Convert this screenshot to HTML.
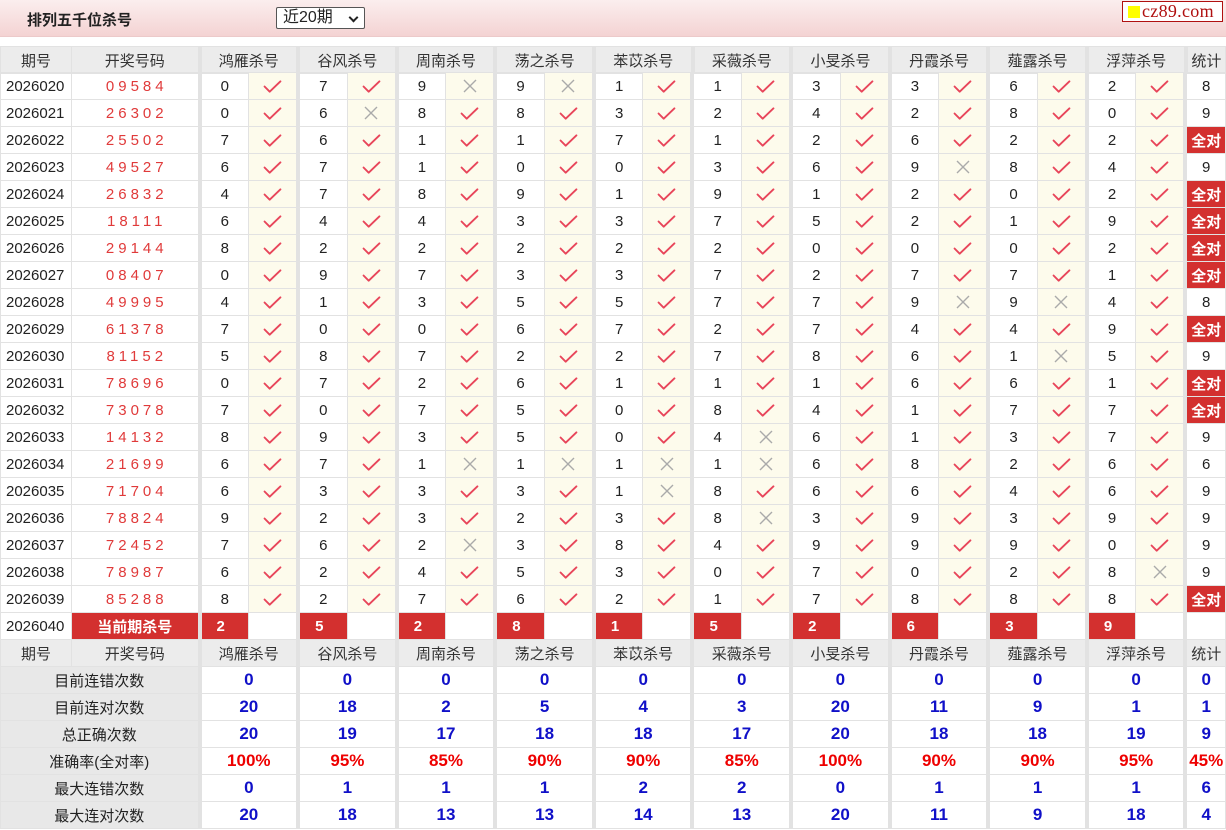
<!DOCTYPE html>
<html><head><meta charset="utf-8">
<style>
*{margin:0;padding:0;box-sizing:border-box}
body{width:1226px;height:830px;background:#fff;font-family:"Liberation Sans","Noto Sans CJK SC",sans-serif;font-size:15px;color:#222;overflow:hidden;position:relative}
.top{position:absolute;left:0;top:0;width:1226px;height:37px;background:linear-gradient(#fbeeee,#f4d3d3);border-bottom:1px solid #eccaca}
.title{position:absolute;left:27px;top:9px;font-weight:bold;font-size:15px;color:#222}
.sel{position:absolute;left:276px;top:7px;width:89px;height:22px;border:1px solid #555;background:#fff;font-size:16px;padding-left:6px;line-height:20px;border-radius:2px}
.sel b{position:absolute;right:7px;top:6px;width:7px;height:7px;border-right:2px solid #222;border-bottom:2px solid #222;transform:rotate(45deg)}
.logo{position:absolute;left:1122px;top:1px;width:101px;height:21px;background:#fff;border:1px solid #b01010;font-family:"Liberation Serif",serif;font-size:18px;color:#b01010;line-height:19px;padding-left:19px;letter-spacing:.3px;overflow:hidden}
.logo i{position:absolute;left:5px;top:4px;width:12px;height:12px;background:#ffff00}
table{position:absolute;left:0;top:46px;width:1226px;border-collapse:collapse;table-layout:fixed}
td,th{height:27px;border:1px solid #e2e2e2;text-align:center;font-weight:normal;padding:0;white-space:nowrap}
th{background:#ececec;color:#333}
td.q{text-align:left;padding-left:5px}
td.k{color:#e03a3a;letter-spacing:4px;padding-left:4px}
.g{border-left:4px solid #e2e2e2}
td.c{background:#fdfbec;font-size:0}
td.c svg{display:block;margin:0 auto}
.r{background:#d3302f;color:#fff;font-weight:bold}
td.all{background:#d3302f;color:#fff;font-weight:bold}
td.rn{text-align:left;padding-left:15px}
.lb{background:#e8e8e8}
.b{color:#1010c8;font-weight:bold;font-size:17px}
.p{color:#e00;font-weight:bold;font-size:17px}
</style></head><body>
<div class="top"><div class="title">排列五千位杀号</div><div class="sel">近20期<b></b></div><div class="logo"><i></i>cz89.com</div></div>
<svg width="0" height="0" style="position:absolute"><defs>
<symbol id="ck" viewBox="0 0 22 16"><path d="M2.5 8 L8 13.5 L19.5 2.5" fill="none" stroke="#e8455a" stroke-width="2" stroke-linecap="round" stroke-linejoin="round"/></symbol>
<symbol id="xx" viewBox="0 0 16 16"><path d="M2 2 L14 14 M14 2 L2 14" fill="none" stroke="#aaa" stroke-width="1.4"/></symbol>
</defs></svg>
<table>
<colgroup><col style="width:71px"><col style="width:128px">
<col style="width:49px"><col style="width:49.6px"><col style="width:49px"><col style="width:49.6px"><col style="width:49px"><col style="width:49.6px"><col style="width:49px"><col style="width:49.6px"><col style="width:49px"><col style="width:49.6px"><col style="width:49px"><col style="width:49.6px"><col style="width:49px"><col style="width:49.6px"><col style="width:49px"><col style="width:49.6px"><col style="width:49px"><col style="width:49.6px"><col style="width:49px"><col style="width:49.6px"><col style="width:40px"></colgroup>
<tr><th>期号</th><th>开奖号码</th><th colspan="2" class="g">鸿雁杀号</th><th colspan="2" class="g">谷风杀号</th><th colspan="2" class="g">周南杀号</th><th colspan="2" class="g">荡之杀号</th><th colspan="2" class="g">苯苡杀号</th><th colspan="2" class="g">采薇杀号</th><th colspan="2" class="g">小旻杀号</th><th colspan="2" class="g">丹霞杀号</th><th colspan="2" class="g">薤露杀号</th><th colspan="2" class="g">浮萍杀号</th><th class="g">统计</th></tr>
</table>
<table style="top:72px">
<colgroup><col style="width:71px"><col style="width:128px">
<col style="width:49px"><col style="width:49.6px"><col style="width:49px"><col style="width:49.6px"><col style="width:49px"><col style="width:49.6px"><col style="width:49px"><col style="width:49.6px"><col style="width:49px"><col style="width:49.6px"><col style="width:49px"><col style="width:49.6px"><col style="width:49px"><col style="width:49.6px"><col style="width:49px"><col style="width:49.6px"><col style="width:49px"><col style="width:49.6px"><col style="width:49px"><col style="width:49.6px"><col style="width:40px"></colgroup>
<tbody id="body2">
<tr><td class="q">2026020</td><td class="k">09584</td><td class="g">0</td><td class="c">C</td><td class="g">7</td><td class="c">C</td><td class="g">9</td><td class="c">X</td><td class="g">9</td><td class="c">X</td><td class="g">1</td><td class="c">C</td><td class="g">1</td><td class="c">C</td><td class="g">3</td><td class="c">C</td><td class="g">3</td><td class="c">C</td><td class="g">6</td><td class="c">C</td><td class="g">2</td><td class="c">C</td><td class="g">8</td></tr>
<tr><td class="q">2026021</td><td class="k">26302</td><td class="g">0</td><td class="c">C</td><td class="g">6</td><td class="c">X</td><td class="g">8</td><td class="c">C</td><td class="g">8</td><td class="c">C</td><td class="g">3</td><td class="c">C</td><td class="g">2</td><td class="c">C</td><td class="g">4</td><td class="c">C</td><td class="g">2</td><td class="c">C</td><td class="g">8</td><td class="c">C</td><td class="g">0</td><td class="c">C</td><td class="g">9</td></tr>
<tr><td class="q">2026022</td><td class="k">25502</td><td class="g">7</td><td class="c">C</td><td class="g">6</td><td class="c">C</td><td class="g">1</td><td class="c">C</td><td class="g">1</td><td class="c">C</td><td class="g">7</td><td class="c">C</td><td class="g">1</td><td class="c">C</td><td class="g">2</td><td class="c">C</td><td class="g">6</td><td class="c">C</td><td class="g">2</td><td class="c">C</td><td class="g">2</td><td class="c">C</td><td class="g all">全对</td></tr>
<tr><td class="q">2026023</td><td class="k">49527</td><td class="g">6</td><td class="c">C</td><td class="g">7</td><td class="c">C</td><td class="g">1</td><td class="c">C</td><td class="g">0</td><td class="c">C</td><td class="g">0</td><td class="c">C</td><td class="g">3</td><td class="c">C</td><td class="g">6</td><td class="c">C</td><td class="g">9</td><td class="c">X</td><td class="g">8</td><td class="c">C</td><td class="g">4</td><td class="c">C</td><td class="g">9</td></tr>
<tr><td class="q">2026024</td><td class="k">26832</td><td class="g">4</td><td class="c">C</td><td class="g">7</td><td class="c">C</td><td class="g">8</td><td class="c">C</td><td class="g">9</td><td class="c">C</td><td class="g">1</td><td class="c">C</td><td class="g">9</td><td class="c">C</td><td class="g">1</td><td class="c">C</td><td class="g">2</td><td class="c">C</td><td class="g">0</td><td class="c">C</td><td class="g">2</td><td class="c">C</td><td class="g all">全对</td></tr>
<tr><td class="q">2026025</td><td class="k">18111</td><td class="g">6</td><td class="c">C</td><td class="g">4</td><td class="c">C</td><td class="g">4</td><td class="c">C</td><td class="g">3</td><td class="c">C</td><td class="g">3</td><td class="c">C</td><td class="g">7</td><td class="c">C</td><td class="g">5</td><td class="c">C</td><td class="g">2</td><td class="c">C</td><td class="g">1</td><td class="c">C</td><td class="g">9</td><td class="c">C</td><td class="g all">全对</td></tr>
<tr><td class="q">2026026</td><td class="k">29144</td><td class="g">8</td><td class="c">C</td><td class="g">2</td><td class="c">C</td><td class="g">2</td><td class="c">C</td><td class="g">2</td><td class="c">C</td><td class="g">2</td><td class="c">C</td><td class="g">2</td><td class="c">C</td><td class="g">0</td><td class="c">C</td><td class="g">0</td><td class="c">C</td><td class="g">0</td><td class="c">C</td><td class="g">2</td><td class="c">C</td><td class="g all">全对</td></tr>
<tr><td class="q">2026027</td><td class="k">08407</td><td class="g">0</td><td class="c">C</td><td class="g">9</td><td class="c">C</td><td class="g">7</td><td class="c">C</td><td class="g">3</td><td class="c">C</td><td class="g">3</td><td class="c">C</td><td class="g">7</td><td class="c">C</td><td class="g">2</td><td class="c">C</td><td class="g">7</td><td class="c">C</td><td class="g">7</td><td class="c">C</td><td class="g">1</td><td class="c">C</td><td class="g all">全对</td></tr>
<tr><td class="q">2026028</td><td class="k">49995</td><td class="g">4</td><td class="c">C</td><td class="g">1</td><td class="c">C</td><td class="g">3</td><td class="c">C</td><td class="g">5</td><td class="c">C</td><td class="g">5</td><td class="c">C</td><td class="g">7</td><td class="c">C</td><td class="g">7</td><td class="c">C</td><td class="g">9</td><td class="c">X</td><td class="g">9</td><td class="c">X</td><td class="g">4</td><td class="c">C</td><td class="g">8</td></tr>
<tr><td class="q">2026029</td><td class="k">61378</td><td class="g">7</td><td class="c">C</td><td class="g">0</td><td class="c">C</td><td class="g">0</td><td class="c">C</td><td class="g">6</td><td class="c">C</td><td class="g">7</td><td class="c">C</td><td class="g">2</td><td class="c">C</td><td class="g">7</td><td class="c">C</td><td class="g">4</td><td class="c">C</td><td class="g">4</td><td class="c">C</td><td class="g">9</td><td class="c">C</td><td class="g all">全对</td></tr>
<tr><td class="q">2026030</td><td class="k">81152</td><td class="g">5</td><td class="c">C</td><td class="g">8</td><td class="c">C</td><td class="g">7</td><td class="c">C</td><td class="g">2</td><td class="c">C</td><td class="g">2</td><td class="c">C</td><td class="g">7</td><td class="c">C</td><td class="g">8</td><td class="c">C</td><td class="g">6</td><td class="c">C</td><td class="g">1</td><td class="c">X</td><td class="g">5</td><td class="c">C</td><td class="g">9</td></tr>
<tr><td class="q">2026031</td><td class="k">78696</td><td class="g">0</td><td class="c">C</td><td class="g">7</td><td class="c">C</td><td class="g">2</td><td class="c">C</td><td class="g">6</td><td class="c">C</td><td class="g">1</td><td class="c">C</td><td class="g">1</td><td class="c">C</td><td class="g">1</td><td class="c">C</td><td class="g">6</td><td class="c">C</td><td class="g">6</td><td class="c">C</td><td class="g">1</td><td class="c">C</td><td class="g all">全对</td></tr>
<tr><td class="q">2026032</td><td class="k">73078</td><td class="g">7</td><td class="c">C</td><td class="g">0</td><td class="c">C</td><td class="g">7</td><td class="c">C</td><td class="g">5</td><td class="c">C</td><td class="g">0</td><td class="c">C</td><td class="g">8</td><td class="c">C</td><td class="g">4</td><td class="c">C</td><td class="g">1</td><td class="c">C</td><td class="g">7</td><td class="c">C</td><td class="g">7</td><td class="c">C</td><td class="g all">全对</td></tr>
<tr><td class="q">2026033</td><td class="k">14132</td><td class="g">8</td><td class="c">C</td><td class="g">9</td><td class="c">C</td><td class="g">3</td><td class="c">C</td><td class="g">5</td><td class="c">C</td><td class="g">0</td><td class="c">C</td><td class="g">4</td><td class="c">X</td><td class="g">6</td><td class="c">C</td><td class="g">1</td><td class="c">C</td><td class="g">3</td><td class="c">C</td><td class="g">7</td><td class="c">C</td><td class="g">9</td></tr>
<tr><td class="q">2026034</td><td class="k">21699</td><td class="g">6</td><td class="c">C</td><td class="g">7</td><td class="c">C</td><td class="g">1</td><td class="c">X</td><td class="g">1</td><td class="c">X</td><td class="g">1</td><td class="c">X</td><td class="g">1</td><td class="c">X</td><td class="g">6</td><td class="c">C</td><td class="g">8</td><td class="c">C</td><td class="g">2</td><td class="c">C</td><td class="g">6</td><td class="c">C</td><td class="g">6</td></tr>
<tr><td class="q">2026035</td><td class="k">71704</td><td class="g">6</td><td class="c">C</td><td class="g">3</td><td class="c">C</td><td class="g">3</td><td class="c">C</td><td class="g">3</td><td class="c">C</td><td class="g">1</td><td class="c">X</td><td class="g">8</td><td class="c">C</td><td class="g">6</td><td class="c">C</td><td class="g">6</td><td class="c">C</td><td class="g">4</td><td class="c">C</td><td class="g">6</td><td class="c">C</td><td class="g">9</td></tr>
<tr><td class="q">2026036</td><td class="k">78824</td><td class="g">9</td><td class="c">C</td><td class="g">2</td><td class="c">C</td><td class="g">3</td><td class="c">C</td><td class="g">2</td><td class="c">C</td><td class="g">3</td><td class="c">C</td><td class="g">8</td><td class="c">X</td><td class="g">3</td><td class="c">C</td><td class="g">9</td><td class="c">C</td><td class="g">3</td><td class="c">C</td><td class="g">9</td><td class="c">C</td><td class="g">9</td></tr>
<tr><td class="q">2026037</td><td class="k">72452</td><td class="g">7</td><td class="c">C</td><td class="g">6</td><td class="c">C</td><td class="g">2</td><td class="c">X</td><td class="g">3</td><td class="c">C</td><td class="g">8</td><td class="c">C</td><td class="g">4</td><td class="c">C</td><td class="g">9</td><td class="c">C</td><td class="g">9</td><td class="c">C</td><td class="g">9</td><td class="c">C</td><td class="g">0</td><td class="c">C</td><td class="g">9</td></tr>
<tr><td class="q">2026038</td><td class="k">78987</td><td class="g">6</td><td class="c">C</td><td class="g">2</td><td class="c">C</td><td class="g">4</td><td class="c">C</td><td class="g">5</td><td class="c">C</td><td class="g">3</td><td class="c">C</td><td class="g">0</td><td class="c">C</td><td class="g">7</td><td class="c">C</td><td class="g">0</td><td class="c">C</td><td class="g">2</td><td class="c">C</td><td class="g">8</td><td class="c">X</td><td class="g">9</td></tr>
<tr><td class="q">2026039</td><td class="k">85288</td><td class="g">8</td><td class="c">C</td><td class="g">2</td><td class="c">C</td><td class="g">7</td><td class="c">C</td><td class="g">6</td><td class="c">C</td><td class="g">2</td><td class="c">C</td><td class="g">1</td><td class="c">C</td><td class="g">7</td><td class="c">C</td><td class="g">8</td><td class="c">C</td><td class="g">8</td><td class="c">C</td><td class="g">8</td><td class="c">C</td><td class="g all">全对</td></tr>
<tr><td class="q">2026040</td><td class="r">当前期杀号</td><td class="g r rn">2</td><td></td><td class="g r rn">5</td><td></td><td class="g r rn">2</td><td></td><td class="g r rn">8</td><td></td><td class="g r rn">1</td><td></td><td class="g r rn">5</td><td></td><td class="g r rn">2</td><td></td><td class="g r rn">6</td><td></td><td class="g r rn">3</td><td></td><td class="g r rn">9</td><td></td><td class="g"></td></tr>
<tr><th>期号</th><th>开奖号码</th><th colspan="2" class="g">鸿雁杀号</th><th colspan="2" class="g">谷风杀号</th><th colspan="2" class="g">周南杀号</th><th colspan="2" class="g">荡之杀号</th><th colspan="2" class="g">苯苡杀号</th><th colspan="2" class="g">采薇杀号</th><th colspan="2" class="g">小旻杀号</th><th colspan="2" class="g">丹霞杀号</th><th colspan="2" class="g">薤露杀号</th><th colspan="2" class="g">浮萍杀号</th><th class="g">统计</th></tr>
<tr><td colspan="2" class="lb">目前连错次数</td><td colspan="2" class="g b">0</td><td colspan="2" class="g b">0</td><td colspan="2" class="g b">0</td><td colspan="2" class="g b">0</td><td colspan="2" class="g b">0</td><td colspan="2" class="g b">0</td><td colspan="2" class="g b">0</td><td colspan="2" class="g b">0</td><td colspan="2" class="g b">0</td><td colspan="2" class="g b">0</td><td class="g b">0</td></tr>
<tr><td colspan="2" class="lb">目前连对次数</td><td colspan="2" class="g b">20</td><td colspan="2" class="g b">18</td><td colspan="2" class="g b">2</td><td colspan="2" class="g b">5</td><td colspan="2" class="g b">4</td><td colspan="2" class="g b">3</td><td colspan="2" class="g b">20</td><td colspan="2" class="g b">11</td><td colspan="2" class="g b">9</td><td colspan="2" class="g b">1</td><td class="g b">1</td></tr>
<tr><td colspan="2" class="lb">总正确次数</td><td colspan="2" class="g b">20</td><td colspan="2" class="g b">19</td><td colspan="2" class="g b">17</td><td colspan="2" class="g b">18</td><td colspan="2" class="g b">18</td><td colspan="2" class="g b">17</td><td colspan="2" class="g b">20</td><td colspan="2" class="g b">18</td><td colspan="2" class="g b">18</td><td colspan="2" class="g b">19</td><td class="g b">9</td></tr>
<tr><td colspan="2" class="lb">准确率(全对率)</td><td colspan="2" class="g p">100%</td><td colspan="2" class="g p">95%</td><td colspan="2" class="g p">85%</td><td colspan="2" class="g p">90%</td><td colspan="2" class="g p">90%</td><td colspan="2" class="g p">85%</td><td colspan="2" class="g p">100%</td><td colspan="2" class="g p">90%</td><td colspan="2" class="g p">90%</td><td colspan="2" class="g p">95%</td><td class="g p">45%</td></tr>
<tr><td colspan="2" class="lb">最大连错次数</td><td colspan="2" class="g b">0</td><td colspan="2" class="g b">1</td><td colspan="2" class="g b">1</td><td colspan="2" class="g b">1</td><td colspan="2" class="g b">2</td><td colspan="2" class="g b">2</td><td colspan="2" class="g b">0</td><td colspan="2" class="g b">1</td><td colspan="2" class="g b">1</td><td colspan="2" class="g b">1</td><td class="g b">6</td></tr>
<tr><td colspan="2" class="lb">最大连对次数</td><td colspan="2" class="g b">20</td><td colspan="2" class="g b">18</td><td colspan="2" class="g b">13</td><td colspan="2" class="g b">13</td><td colspan="2" class="g b">14</td><td colspan="2" class="g b">13</td><td colspan="2" class="g b">20</td><td colspan="2" class="g b">11</td><td colspan="2" class="g b">9</td><td colspan="2" class="g b">18</td><td class="g b">4</td></tr>
</tbody></table>
<script>
document.querySelectorAll('#body2 td.c').forEach(function(t){
 var v=t.textContent.trim();
 t.innerHTML = v==='C' ? '<svg width="21" height="15"><use href="#ck"/></svg>' : '<svg width="16" height="16"><use href="#xx"/></svg>';
});
</script>
</body></html>
